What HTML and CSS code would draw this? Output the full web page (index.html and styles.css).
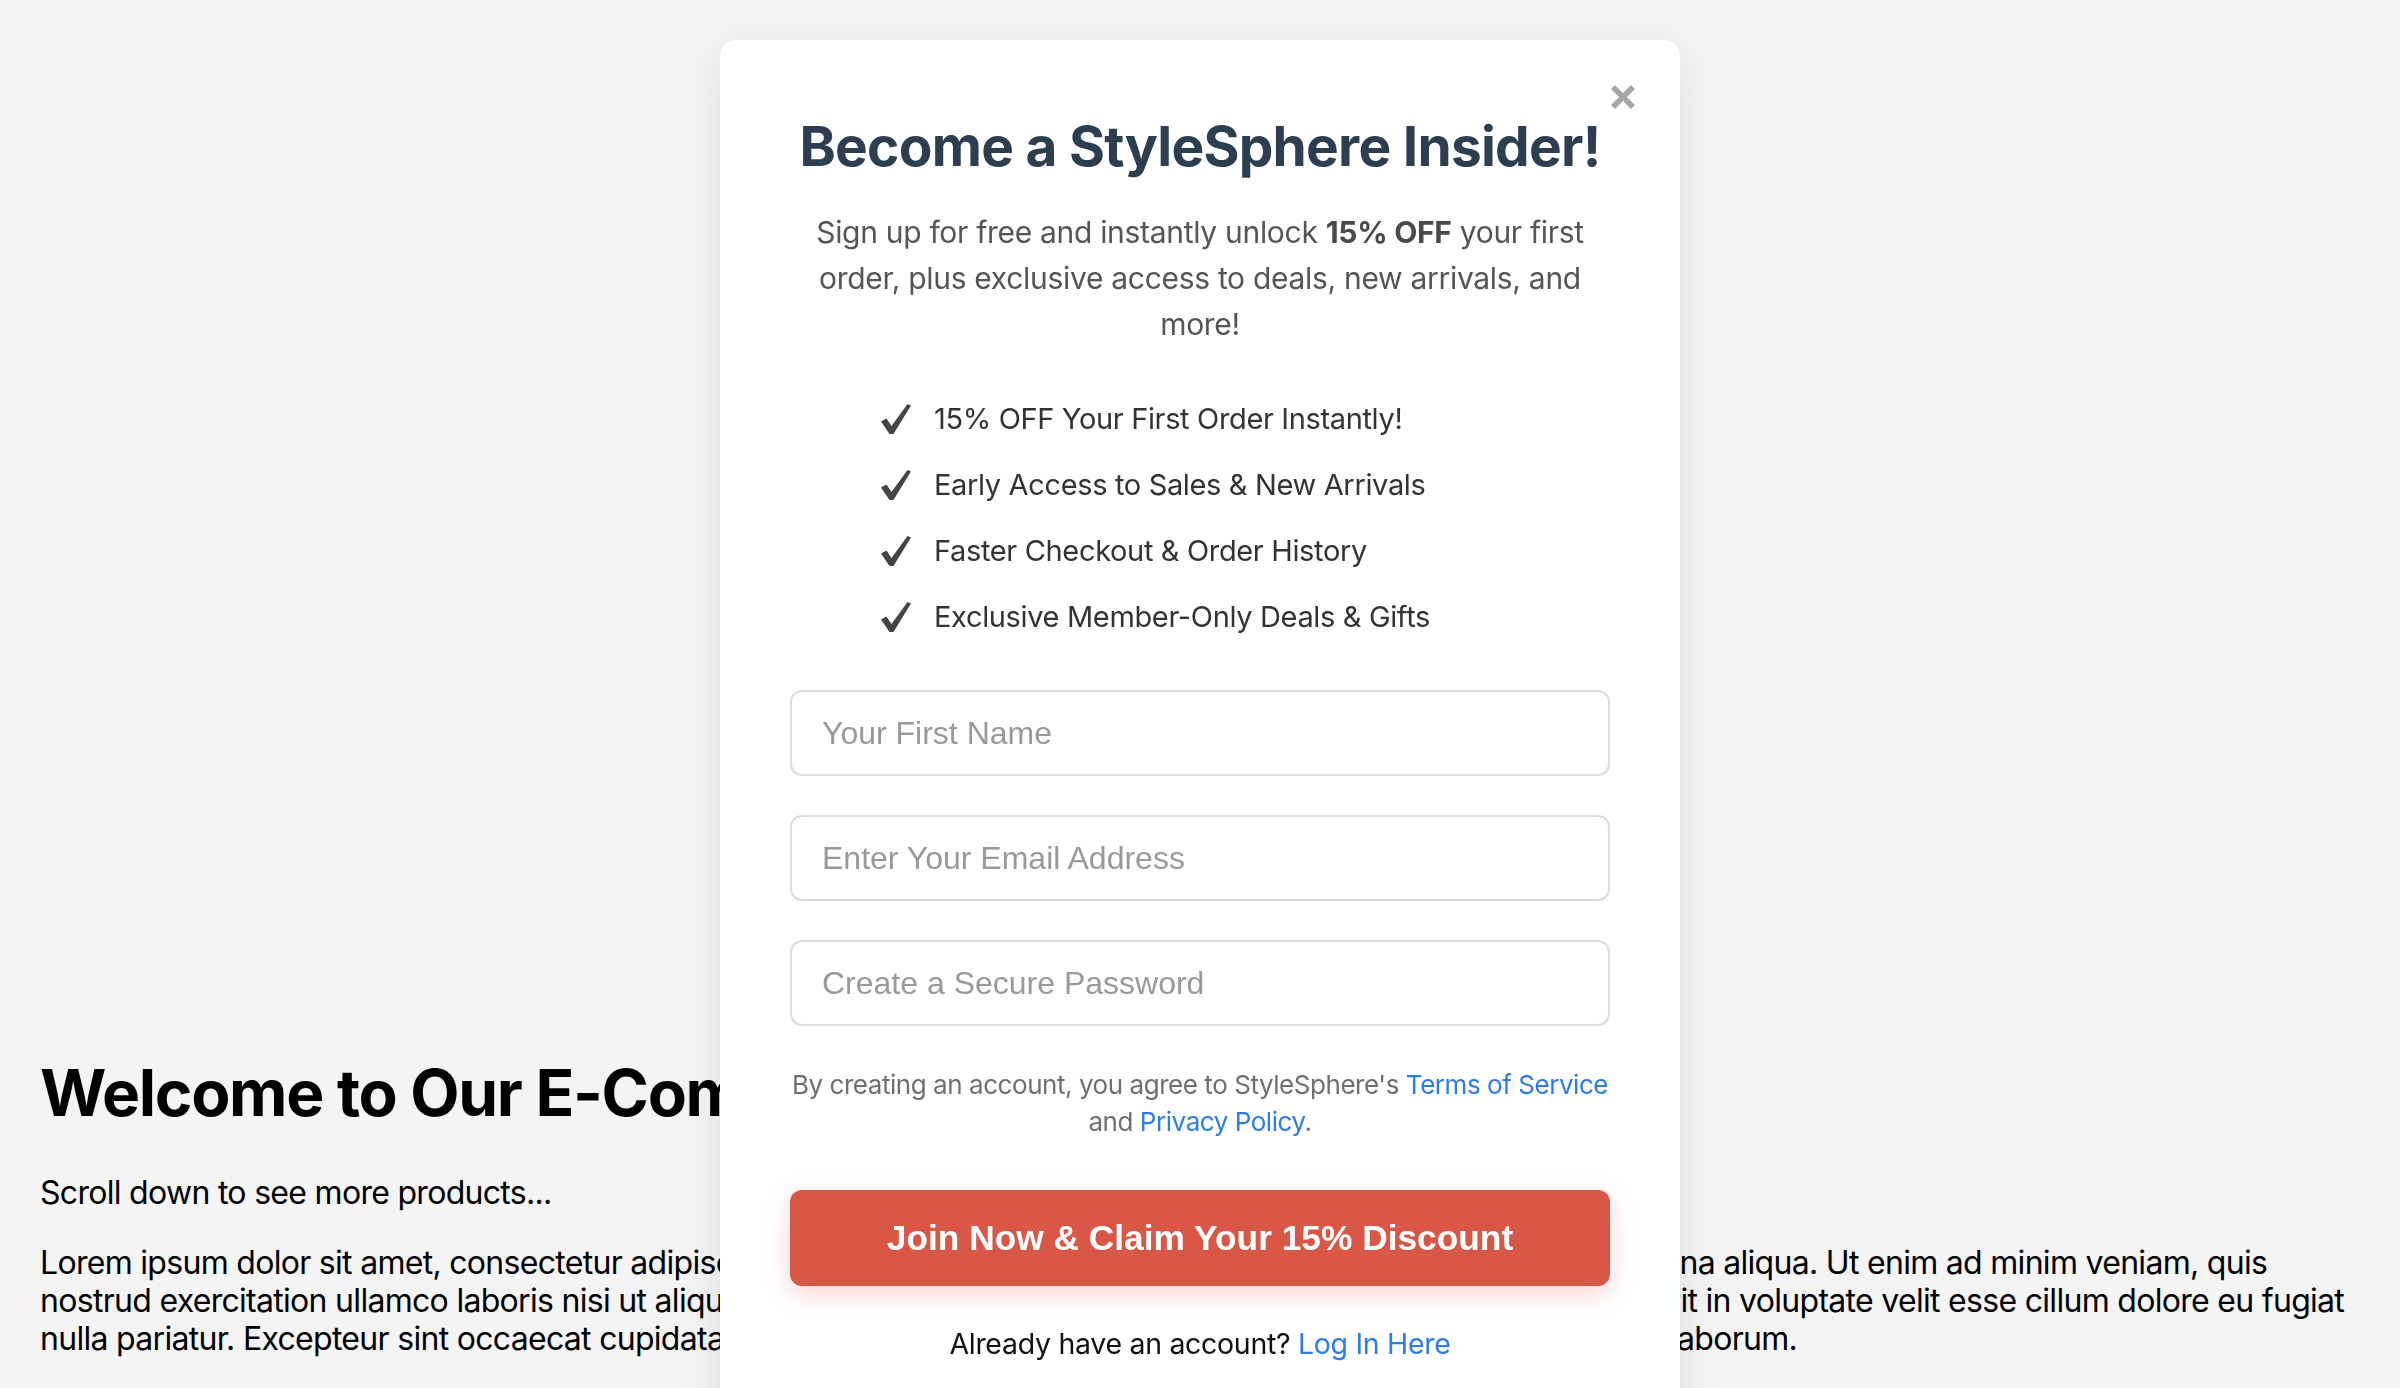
FILE: index.html
```html
<!DOCTYPE html>
<html lang="en">
<head>
<meta charset="utf-8">
<title>StyleSphere</title>
<link rel="stylesheet" href="styles.css">
</head>
<body>
<main class="page">
  <h1 class="page-title">Welcome to Our E-Commerce Store!</h1>
  <p class="page-text">Scroll down to see more products...</p>
  <p class="page-text">Lorem ipsum dolor sit amet, consectetur adipiscing elit, sed do eiusmod tempor incididunt ut labore et dolore magna aliqua. Ut enim ad minim veniam, quis nostrud exercitation ullamco laboris nisi ut aliquip ex ea commodo consequat. Duis aute irure dolor in reprehenderit in voluptate velit esse cillum dolore eu fugiat nulla pariatur. Excepteur sint occaecat cupidatat non proident, sunt in culpa qui officia deserunt mollit anim id est laborum.</p>
</main>

<div class="modal" role="dialog" aria-labelledby="modal-title">
  <button class="modal-close" type="button" aria-label="Close">
    <svg viewBox="0 0 26 26" width="26" height="26"><path d="M3 3 L23 23 M23 3 L3 23" stroke="#a6a6a6" stroke-width="5.5" fill="none"/></svg>
  </button>
  <h2 class="modal-title" id="modal-title">Become a StyleSphere Insider!</h2>
  <p class="modal-sub">Sign up for free and instantly unlock <strong>15% OFF</strong> your first order, plus exclusive access to deals, new arrivals, and more!</p>
  <ul class="perks">
    <li class="perk"><svg class="check" viewBox="0 0 32 32" width="32" height="32"><path d="M1 18.5 L6.5 15.5 L11.5 23 L27.5 1 L31 2.5 L13.5 31 L9.5 31 Z" fill="#444"/></svg><span>15% OFF Your First Order Instantly!</span></li>
    <li class="perk"><svg class="check" viewBox="0 0 32 32" width="32" height="32"><path d="M1 18.5 L6.5 15.5 L11.5 23 L27.5 1 L31 2.5 L13.5 31 L9.5 31 Z" fill="#444"/></svg><span>Early Access to Sales &amp; New Arrivals</span></li>
    <li class="perk"><svg class="check" viewBox="0 0 32 32" width="32" height="32"><path d="M1 18.5 L6.5 15.5 L11.5 23 L27.5 1 L31 2.5 L13.5 31 L9.5 31 Z" fill="#444"/></svg><span>Faster Checkout &amp; Order History</span></li>
    <li class="perk"><svg class="check" viewBox="0 0 32 32" width="32" height="32"><path d="M1 18.5 L6.5 15.5 L11.5 23 L27.5 1 L31 2.5 L13.5 31 L9.5 31 Z" fill="#444"/></svg><span>Exclusive Member-Only Deals &amp; Gifts</span></li>
  </ul>
  <form class="signup">
    <input class="field" type="text" placeholder="Your First Name">
    <input class="field" type="email" placeholder="Enter Your Email Address">
    <input class="field" type="password" placeholder="Create a Secure Password">
    <p class="terms">By creating an account, you agree to StyleSphere's <a href="#">Terms of Service</a> and <a href="#">Privacy Policy</a>.</p>
    <button class="cta" type="button">Join Now &amp; Claim Your 15% Discount</button>
  </form>
  <p class="login">Already have an account? <a href="#">Log In Here</a></p>
</div>
</body>
</html>
```

FILE: styles.css
```css
* { box-sizing: border-box; }

html, body {
  margin: 0;
  height: 100%;
}

body {
  background: #f4f4f4;
  font-family: Inter, "Noto Sans", sans-serif;
  color: #000;
  overflow: hidden;
}

.page {
  padding: 1054px 40px 0;
}

.page-title {
  font-size: 64px;
  font-weight: 700;
  line-height: 77px;
  margin: 0 0 43px;
  letter-spacing: -1.3px;
  white-space: nowrap;
}

.page-text {
  font-size: 32px;
  line-height: 38px;
  margin: 0 0 32px;
  letter-spacing: -0.7px;
}

.modal {
  position: fixed;
  top: 40px;
  left: 50%;
  transform: translateX(-50%);
  width: 960px;
  height: 1400px;
  background: #fff;
  border-radius: 16px;
  box-shadow: 0 8px 50px rgba(0, 0, 0, 0.09);
  padding: 72px 70px 0;
  text-align: center;
}

.modal-close {
  position: absolute;
  top: 44px;
  right: 44px;
  width: 26px;
  height: 26px;
  padding: 0;
  border: 0;
  background: none;
  display: flex;
}

.modal-title {
  margin: 0;
  font-size: 55px;
  line-height: 68px;
  font-weight: 700;
  color: #2c3e50;
  letter-spacing: -0.75px;
}

.modal-sub {
  margin: 29px 0 0;
  font-size: 30px;
  line-height: 46px;
  color: #555;
  letter-spacing: -0.3px;
}

.modal-sub strong { color: #4a4a4a; }

.perks {
  list-style: none;
  margin: 48px 0 0;
  padding: 0 0 0 90px;
  display: flex;
  flex-direction: column;
  gap: 18px;
  text-align: left;
}

.perk {
  display: flex;
  align-items: center;
  gap: 22px;
  font-size: 29px;
  line-height: 48px;
  color: #333;
  letter-spacing: -0.35px;
}

.check { flex: none; }

.signup {
  margin-top: 49px;
  display: flex;
  flex-direction: column;
}

.field {
  height: 86px;
  margin: 0 0 39px;
  border: 2px solid #dcdcdc;
  border-radius: 12px;
  padding: 0 30px;
  font-family: "Liberation Sans", Arial, sans-serif;
  font-size: 32px;
  color: #333;
  background: #fff;
  outline: none;
}

.field:last-of-type { margin-bottom: 0; }

.field::placeholder { color: #999; }

.terms {
  margin: 40px 0 0;
  font-size: 26px;
  line-height: 37px;
  color: #6f6f6f;
  letter-spacing: -0.45px;
}

.terms a,
.login a {
  color: #2d7ceb;
  text-decoration: none;
}

.cta {
  margin-top: 50px;
  height: 96px;
  border: 0;
  border-radius: 12px;
  background: #d85747;
  color: #fff;
  font-family: "Liberation Sans", Arial, sans-serif;
  font-weight: 700;
  font-size: 35.3px;
  box-shadow: 0 8px 24px rgba(216, 87, 71, 0.25);
}

.login {
  margin: 39px 0 0;
  font-size: 28.5px;
  line-height: 38px;
  color: #111;
  letter-spacing: -0.3px;
}
```
